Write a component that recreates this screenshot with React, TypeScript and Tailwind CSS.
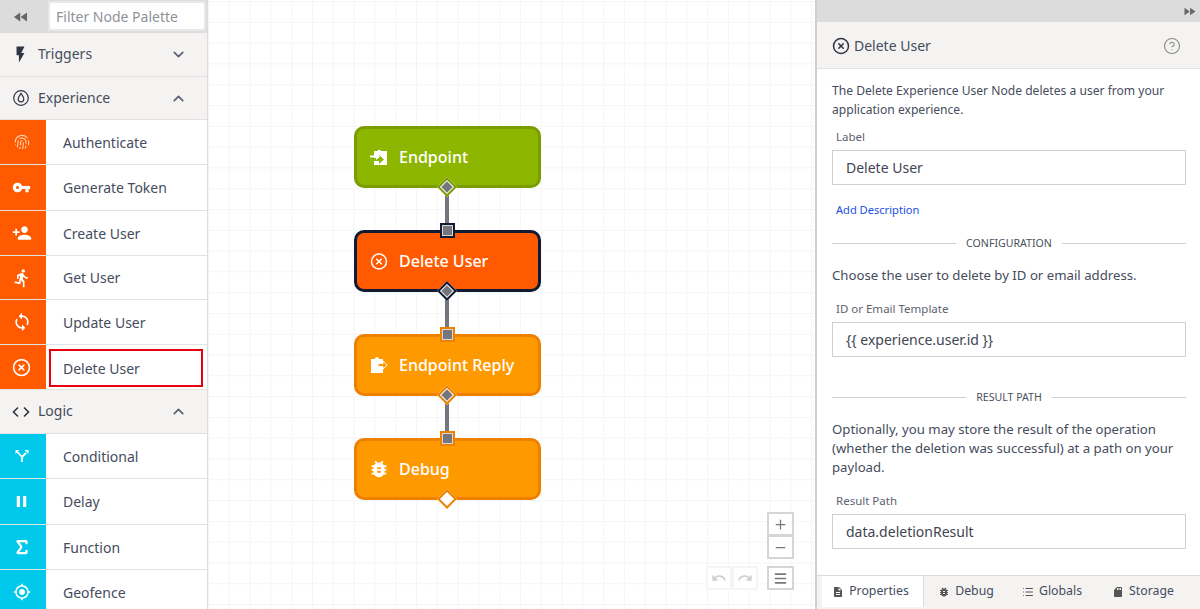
import { ReactNode } from "react";
import { ChevronDown, ChevronUp, Fingerprint, Sigma, CircleX, CircleHelp, Plus, Minus, Menu, List } from "lucide-react";
import { MdVpnKey, MdPersonAdd, MdDirectionsRun, MdSync, MdPause, MdGpsFixed, MdBugReport, MdFlashOn, MdDescription, MdSdCard, MdFastForward, MdFastRewind, MdUndo, MdRedo } from "react-icons/md";

const font = "font-['Noto_Sans','Open_Sans',sans-serif]";

function EndpointIcon() {
  return (
    <svg width="18" height="18" viewBox="0 0 18 18" fill="#fff" className="shrink-0">
      <path d="M4 3h3.500a1.800 1.800 0 0 1 3.400 0H17v14H4v-4h5v3l5-4.500-5-4.500v3H4z" />
      <path d="M0 7.500h6V5l4 3.500-4 3.500V9.500H0z" />
    </svg>
  );
}

function ReplyIcon() {
  return (
    <svg width="18" height="18" viewBox="0 0 18 18" fill="#fff" className="shrink-0">
      <path d="M1 3h4a2 2 0 0 1 4 0h4v14H1z" />
      <path d="M8 7.500h5V5l4.300 4-4.300 4v-2.500H8z" fill="#ff9900" stroke="#fff" strokeWidth="1" />
    </svg>
  );
}

function FlameIcon() {
  return (
    <svg width="16" height="16" viewBox="0 0 16 16" fill="none" stroke="#2f3542" strokeWidth="1.200">
      <circle cx="8" cy="8" r="7.300" />
      <path d="M8 2.800c.5 2.200 2.800 3.500 2.800 6.200a2.800 2.800 0 0 1-5.600 0C5.200 6.300 7.500 5 8 2.800z" />
    </svg>
  );
}

function SplitIcon() {
  return (
    <svg width="14" height="14" viewBox="0 0 14 14" fill="none" stroke="#fff" strokeWidth="1.800">
      <path d="M7 13V8L2.500 3M7 8l4-4" />
      <path d="M0.500 1h4L.5 5zM13.500 1h-4l4 4z" fill="#fff" stroke="none" />
    </svg>
  );
}

function PaletteRow({ icon, label, color, selected, height = "h-[45px]" }: { icon: ReactNode; label: string; color: string; selected?: boolean; height?: string }) {
  return (
    <div className={`flex shrink-0 border-b border-[#e2e2e2] bg-white ${height}`}>
      <div className={`flex w-[46px] shrink-0 items-center justify-center pr-[3px] ${color}`}>{icon}</div>
      {selected ? (
        <div className="ml-[3px] mt-[4px] flex h-[38px] w-[154px] items-center border-2 border-[#e8000f] pl-[12px] text-[14px] text-[#454c5c]">
          {label}
        </div>
      ) : (
        <div className="flex items-center pl-[17px] text-[14px] text-[#454c5c]">{label}</div>
      )}
    </div>
  );
}

function GroupHeader({ icon, label, open, height }: { icon: ReactNode; label: string; open?: boolean; height: string }) {
  return (
    <div className={`flex shrink-0 items-center border-b border-[#e2e2e2] bg-[#f4f3f2] pl-[13px] pr-[20px] text-[14px] text-[#454c5c] ${height}`}>
      <div className="flex w-[25px] items-center">{icon}</div>
      <span className="flex-1 -translate-y-[1px]">{label}</span>
      {open ? <ChevronUp size={17} color="#5b6270" strokeWidth={2.4} /> : <ChevronDown size={17} color="#5b6270" strokeWidth={2.4} />}
    </div>
  );
}

function FlowNode({ icon, label, bg, border, top, dot, line }: { icon: ReactNode; label: string; bg: string; border: string; top?: string; dot?: boolean; line?: boolean }) {
  return (
    <div className={`relative flex h-[62px] w-[187px] items-center rounded-[10px] border-[3px] pl-[13px] text-[16px] font-medium text-white ${bg} ${border}`}>
      <div className="mr-[11px] flex w-[18px] items-center justify-center">{icon}</div>
      <span>{label}</span>
      {line && <div className="absolute left-[88px] top-[56px] h-[44px] w-[4px] bg-[#75757d]" />}
      {top && (
        <div className={`absolute left-[83px] -top-[10px] flex h-[15px] w-[15px] items-center justify-center border-[3px] ${top}`}>
          <div className="h-[9px] w-[9px] bg-[#75757d] ring-1 ring-[#d8d8d8]" />
        </div>
      )}
      <div className={`absolute left-[83px] top-[51px] flex h-[14px] w-[14px] rotate-45 items-center justify-center border-2 bg-white ${border}`}>
        {dot && <div className="h-[8px] w-[8px] bg-[#75757d]" />}
      </div>
    </div>
  );
}

function Divider({ label }: { label: string }) {
  return (
    <div className="flex items-center gap-[10px] text-[10.600px] text-[#4a505c]">
      <div className="h-px flex-1 bg-[#cfcfcf]" />
      <span>{label}</span>
      <div className="h-px flex-1 bg-[#cfcfcf]" />
    </div>
  );
}

function Field({ label, value }: { label: string; value: string }) {
  return (
    <div>
      <div className="pb-[5px] pl-[4px] text-[11.500px] leading-[16px] text-[#5d6370]">{label}</div>
      <div className="flex h-[35px] items-center border border-[#cfcfcf] bg-white pl-[13px] text-[14px] text-[#3f4552]">{value}</div>
    </div>
  );
}

function Tab({ icon, label, width, active }: { icon: ReactNode; label: string; width: string; active?: boolean }) {
  return (
    <div className={`flex h-[31px] items-center justify-center gap-[5px] text-[12.300px] text-[#454c5c] ${width} ${active ? "border-r border-[#dcdcdc] bg-white pr-[4px]" : ""}`}>
      {icon}
      <span>{label}</span>
    </div>
  );
}

function CanvasBtn({ children, faint }: { children: ReactNode; faint?: boolean }) {
  return (
    <div className={`flex h-[24px] items-center justify-center border-2 bg-white ${faint ? "w-[26px] border-[#f5f5f5]" : "w-[27px] border-[#d5d5d5]"}`}>
      {children}
    </div>
  );
}

export default function App() {
  return (
    <div className={`flex h-[609px] w-[1200px] overflow-hidden bg-white ${font}`}>
      {/* palette */}
      <div className="flex w-[208px] shrink-0 flex-col overflow-hidden border-r border-[#dcdcdc]">
        <div className="flex h-[33px] shrink-0 bg-[#dcdcdc]">
          <div className="flex w-[48px] items-center justify-center pr-[6px]">
            <MdFastRewind size={18} color="#666" />
          </div>
          <div className="mr-[1px] mt-[1px] flex h-[30px] flex-1 items-center border-2 border-[#e8e8e8] bg-white pl-[6px] text-[14px] text-[#8e929a]">
            Filter Node Palette
          </div>
        </div>
        <GroupHeader height="h-[44px]" label="Triggers" icon={<MdFlashOn size={19} color="#2f3542" className="-ml-[2px]" />} />
        <GroupHeader height="h-[43px]" label="Experience" open icon={<FlameIcon />} />
        <PaletteRow color="bg-[#ff5a00]" label="Authenticate" icon={<Fingerprint size={16} color="#ffd9c2" strokeWidth={1.600} />} />
        <PaletteRow color="bg-[#ff5a00]" label="Generate Token" height="h-[46px]" icon={<MdVpnKey size={19} color="#fff" />} />
        <PaletteRow color="bg-[#ff5a00]" label="Create User" icon={<MdPersonAdd size={20} color="#fff" />} />
        <PaletteRow color="bg-[#ff5a00]" label="Get User" height="h-[44px]" icon={<MdDirectionsRun size={20} color="#fff" />} />
        <PaletteRow color="bg-[#ff5a00]" label="Update User" icon={<MdSync size={20} color="#fff" />} />
        <PaletteRow color="bg-[#ff5a00]" label="Delete User" selected icon={<CircleX size={19} color="#fff" />} />
        <GroupHeader height="h-[44px]" label="Logic" open icon={
          <svg width="18" height="12" viewBox="0 0 18 12" fill="none" stroke="#2f3542" strokeWidth="1.600" className="-ml-[1px]"><path d="M6 1.500 1.500 6 6 10.500M12 1.500 16.500 6 12 10.500" /></svg>
        } />
        <PaletteRow color="bg-[#00c9ec]" label="Conditional" icon={<SplitIcon />} />
        <PaletteRow color="bg-[#00c9ec]" label="Delay" height="h-[46px]" icon={<MdPause size={19} color="#fff" />} />
        <PaletteRow color="bg-[#00c9ec]" label="Function" icon={<Sigma size={18} color="#fff" strokeWidth={3} />} />
        <PaletteRow color="bg-[#00c9ec]" label="Geofence" icon={<MdGpsFixed size={18} color="#fff" />} />
      </div>

      {/* canvas */}
      <div className="relative flex-1 bg-white bg-[linear-gradient(#f5f5f7_1px,transparent_1px),linear-gradient(90deg,#f5f5f7_1px,transparent_1px)] bg-[size:20.800px_20.800px] bg-[position:0px_1px]">
        <div className="flex flex-col gap-[42px] pl-[146px] pt-[126px]">
          <FlowNode label="Endpoint" bg="bg-[#8db600]" border="border-[#7a9c00]" dot icon={<EndpointIcon />} line />
          <FlowNode label="Delete User" bg="bg-[#ff5a00]" border="border-[#101a33]" top="border-[#101a33] bg-[#101a33]" dot icon={<CircleX size={19} color="#fff" />} line />
          <FlowNode label="Endpoint Reply" bg="bg-[#ff9900]" border="border-[#ee8000]" top="border-[#ee8000] bg-[#ee8000]" dot icon={<ReplyIcon />} line />
          <FlowNode label="Debug" bg="bg-[#ff9900]" border="border-[#ee8000]" top="border-[#ee8000] bg-[#ee8000]" icon={<MdBugReport size={22} color="#fff" className="shrink-0" />} />
        </div>
        <div className="absolute bottom-[19px] right-[21px] flex items-end gap-[9px]">
          <div className="flex">
            <CanvasBtn faint><MdUndo size={16} color="#cfcfcf" /></CanvasBtn>
            <CanvasBtn faint><MdRedo size={16} color="#cfcfcf" /></CanvasBtn>
          </div>
          <div className="flex flex-col gap-[7px]">
            <div className="flex flex-col">
              <CanvasBtn><Plus size={15} color="#777" /></CanvasBtn>
              <div className="-mt-[1px]"><CanvasBtn><Minus size={15} color="#777" /></CanvasBtn></div>
            </div>
            <CanvasBtn><Menu size={15} color="#777" strokeWidth={2.600} /></CanvasBtn>
          </div>
        </div>
      </div>

      {/* properties */}
      <div className="flex w-[385px] shrink-0 flex-col border-l-2 border-[#cfcfcf]">
        <div className="flex h-[22px] shrink-0 items-center justify-end bg-[#dcdcdc] pr-[3px]">
          <MdFastForward size={15} color="#666" />
        </div>
        <div className="flex h-[47px] shrink-0 items-center border-b border-[#e2e2e2] bg-[#f4f3f2] pl-[15px] pr-[19px] pt-[1px] text-[14px] text-[#454c5c]">
          <CircleX size={18} color="#2f3542" />
          <span className="ml-[4px] flex-1">Delete User</span>
          <CircleHelp size={18} color="#8a8a8a" strokeWidth={1.500} />
        </div>
        <div className="flex flex-1 flex-col overflow-hidden pl-[15px] pr-[14px] pt-[12px] text-[#454c5c]">
          <p className="text-[12.100px] leading-[19px]">The Delete Experience User Node deletes a user from your application experience.</p>
          <div className="mt-[10px]"><Field label="Label" value="Delete User" /></div>
          <div className="pl-[4px] pt-[17px] text-[11.100px] leading-[16px] text-[#1a4fe0]">Add Description</div>
          <div className="mt-[18px]"><Divider label="CONFIGURATION" /></div>
          <p className="mt-[14px] text-[13.200px] leading-[19px]">Choose the user to delete by ID or email address.</p>
          <div className="mt-[16px]"><Field label="ID or Email Template" value="{{ experience.user.id }}" /></div>
          <div className="mt-[33px]"><Divider label="RESULT PATH" /></div>
          <p className="mt-[14px] text-[13.200px] leading-[19px]">Optionally, you may store the result of the operation (whether the deletion was successful) at a path on your payload.</p>
          <div className="mt-[16px]"><Field label="Result Path" value="data.deletionResult" /></div>
        </div>
        <div className="flex h-[34px] shrink-0 border-t border-[#dcdcdc] bg-[#f4f3f2] pl-[5px]">
          <Tab active width="w-[102px]" label="Properties" icon={<MdDescription size={12} color="#555" />} />
          <Tab width="w-[84px]" label="Debug" icon={<MdBugReport size={12} color="#555" />} />
          <Tab width="w-[88px]" label="Globals" icon={<List size={12} color="#555" />} />
          <Tab width="w-[94px]" label="Storage" icon={<MdSdCard size={12} color="#555" />} />
        </div>
      </div>
    </div>
  );
}
